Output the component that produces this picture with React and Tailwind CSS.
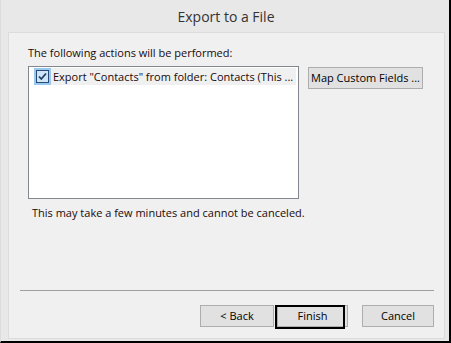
const font = { fontFamily: '"Segoe UI", "Open Sans", "Liberation Sans", sans-serif' }

function Btn({ children, className = '' }) {
  return (
    <button
      type="button"
      className={`flex h-[22px] items-center justify-center whitespace-nowrap border border-[#adadad] bg-[#e1e1e1] text-[11px] text-black ${className}`}
    >
      {children}
    </button>
  )
}

export default function App() {
  return (
    <div
      className="flex h-[343px] w-[451px] flex-col border-b-2 border-l border-r-2 border-b-black border-l-[#dcdcdc] border-r-black bg-[#e8e8e8]"
      style={font}
    >
      {/* title */}
      <div className="flex h-[32px] items-center justify-center pl-[2px] text-[14px] text-[#333]">
        Export to a File
      </div>

      {/* panel */}
      <div className="mb-[2px] ml-[7px] mr-[4px] flex flex-1 flex-col border border-[#dcdcdc] bg-[#f0f0f0]">
        <p className="ml-[19px] mt-[12px] text-[11px] leading-[16px] text-[#1a0a0a]">
          The following actions will be performed:
        </p>

        <div className="ml-[19px] mt-[5px] flex items-start gap-[9px]">
          <div className="h-[133px] w-[271px] border border-[#828790] bg-white p-[1px] pl-[5px]">
            <div className="flex h-[17px] w-[262px] items-center bg-[#f0f0f0]">
              <span className="flex h-[17px] w-[17px] items-center justify-center bg-[#99c9ef]">
                <svg width="13" height="13" viewBox="0 0 13 13">
                  <rect x="0.5" y="0.5" width="12" height="12" fill="#cfe6f8" stroke="#2a4a73" />
                  <path d="M3 6.5 L5.3 9 L10 3.5" fill="none" stroke="#1f3f6a" strokeWidth="1.8" />
                </svg>
              </span>
              <span className="ml-[2px] whitespace-nowrap text-[11px] leading-[16px] text-[#1a0a0a]">
                Export "Contacts" from folder: Contacts (This ...
              </span>
            </div>
          </div>
          <Btn className="mt-[1px] w-[115px]">Map Custom Fields ...</Btn>
        </div>

        <p className="ml-[23px] mt-[6px] text-[11px] leading-[16px] text-[#1a0a0a]">
          This may take a few minutes and cannot be canceled.
        </p>

        <div className="mb-[14px] ml-[11px] mt-auto w-[414px] border-t border-[#a0a0a0]" />

        <div className="mb-[11px] ml-[191px] flex gap-[3px]">
          <Btn className="w-[74px]">&lt; Back</Btn>
          <div className="relative">
            <Btn className="w-[71px]">Finish</Btn>
            <div className="absolute left-[-2px] top-0 h-[24px] w-[70px] border-2 border-black" />
          </div>
          <Btn className="ml-[11px] w-[72px]">Cancel</Btn>
        </div>
      </div>
    </div>
  )
}
